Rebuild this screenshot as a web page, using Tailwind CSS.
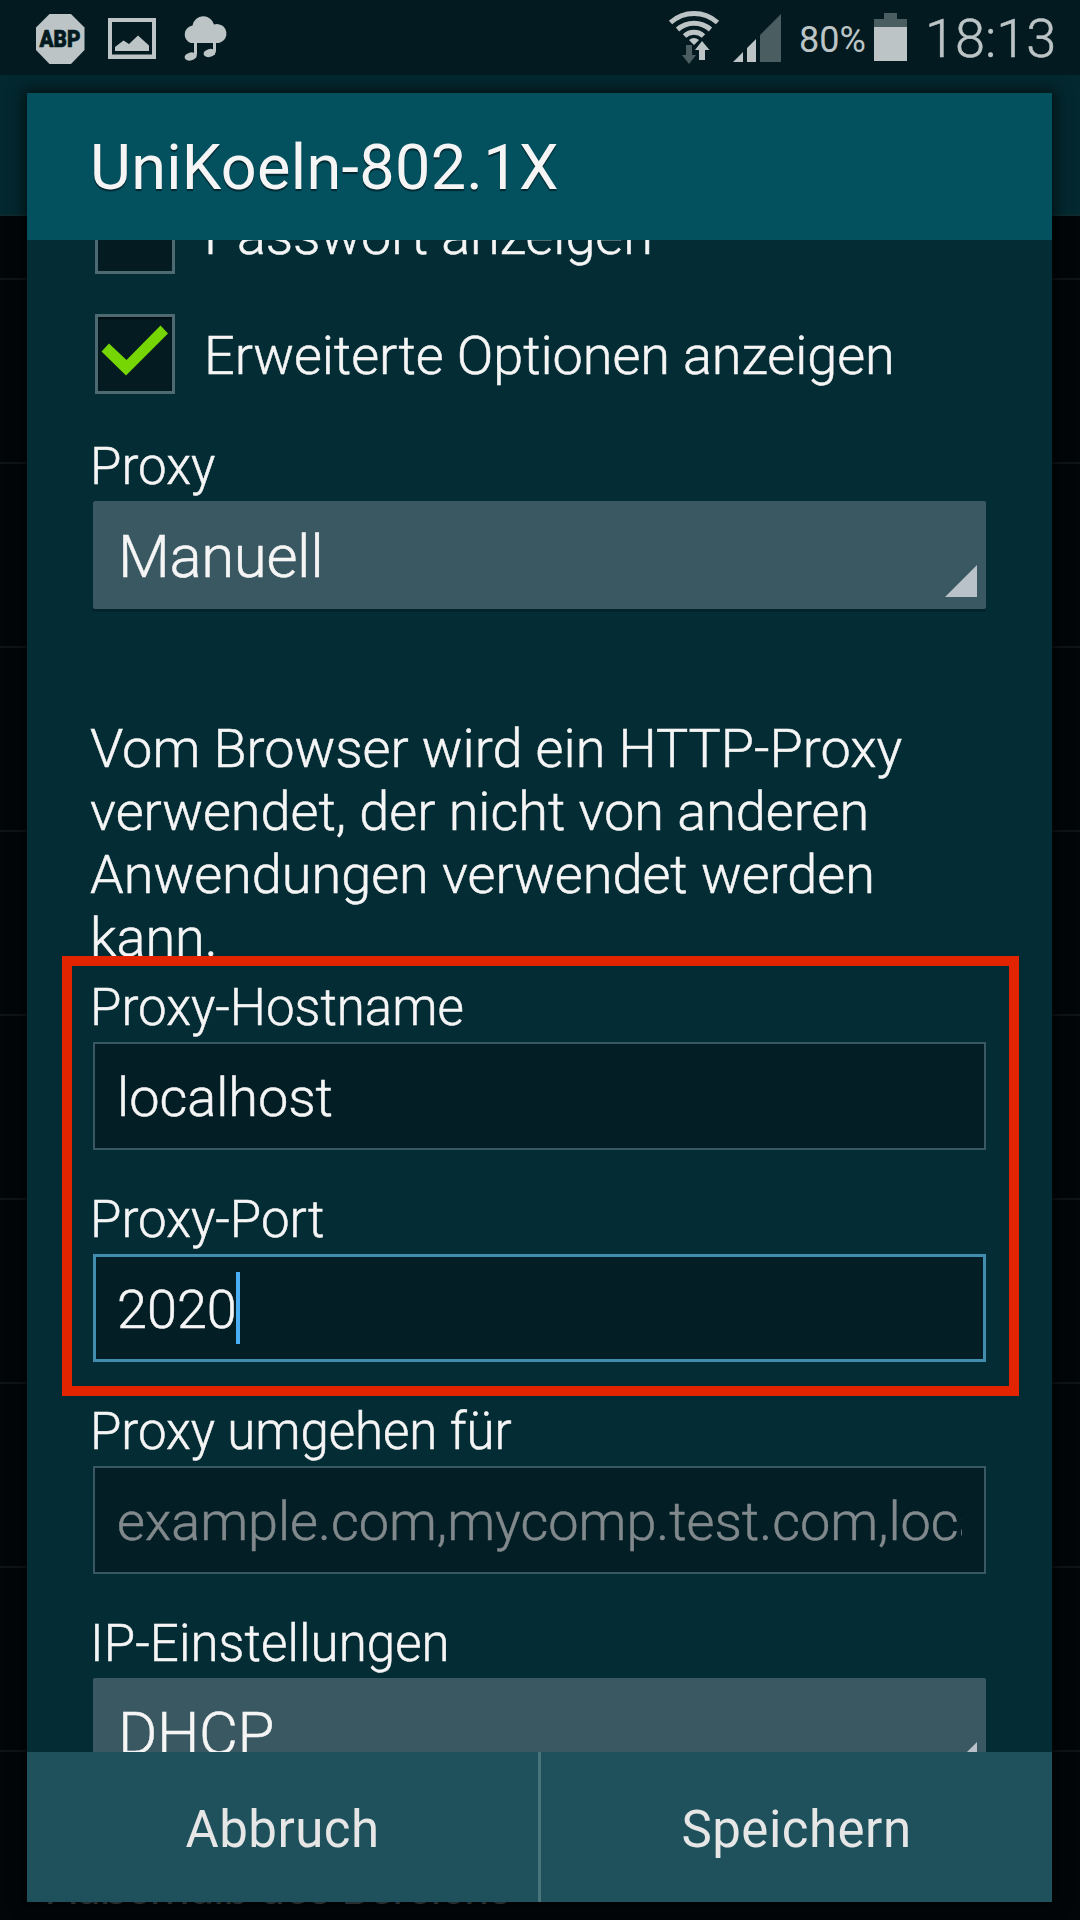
<!DOCTYPE html>
<html lang="de">
<head>
<meta charset="utf-8">
<title>UniKoeln-802.1X</title>
<script src="https://cdn.jsdelivr.net/npm/@tailwindcss/browser@4"></script>
</head>
<body class="relative h-[1920px] w-[1080px] overflow-hidden bg-[#020608] font-['Roboto',sans-serif] text-[#f5f5f5]">
  <!-- Settings list behind the dialog -->
  <div class="absolute inset-0 flex flex-col">
    <div class="mt-[75px] h-[141px] shrink-0 border-b-2 border-[#0c2b30] bg-[#03282f]"></div>
    <div class="h-16 shrink-0 border-b-2 border-[#0f1417]"></div>
    <div class="h-[184px] shrink-0 border-b-2 border-[#0f1417]"></div>
    <div class="h-[184px] shrink-0 border-b-2 border-[#0f1417]"></div>
    <div class="h-[184px] shrink-0 border-b-2 border-[#0f1417]"></div>
    <div class="h-[184px] shrink-0 border-b-2 border-[#0f1417]"></div>
    <div class="h-[184px] shrink-0 border-b-2 border-[#0f1417]"></div>
    <div class="h-[184px] shrink-0 border-b-2 border-[#0f1417]"></div>
    <div class="h-[184px] shrink-0 border-b-2 border-[#0f1417]"></div>
    <div class="h-[184px] shrink-0 border-b-2 border-[#0f1417]"></div>
    <div class="mt-[107px] pl-[47px] text-[45px] leading-[60px] tracking-[-0.4px] whitespace-nowrap text-[#41494d]">Außerhalb des Bereichs</div>
  </div>

  <!-- Dialog -->
  <main class="absolute top-[93px] left-[27px] flex h-[1809px] w-[1025px] flex-col bg-[#042c34] shadow-[0_0_14px_3px_rgba(0,0,0,0.6)]">
    <header class="flex h-[147px] shrink-0 items-center bg-[#03505f] pt-0.5 pl-[63px]">
      <h1 class="text-[63px] leading-[74px] tracking-[0.3px] whitespace-nowrap [text-shadow:0_2px_1px_rgba(0,0,0,0.5)]">UniKoeln-802.1X</h1>
    </header>

    <div class="flex min-h-0 flex-1 flex-col overflow-hidden pr-[66px] pl-[66px] font-light [-webkit-text-stroke:0.5px]">
      <div class="-mt-[46px] ml-0.5 flex h-20 shrink-0 items-center">
        <span class="size-20 border-3 border-[#4d6a72] bg-[#041b21]"></span>
        <span class="ml-[29px] pt-0.5 text-[54px] leading-[63px] tracking-[-0.06px] whitespace-nowrap">Passwort anzeigen</span>
      </div>
      <div class="mt-10 ml-0.5 flex h-20 shrink-0 items-center">
        <span class="size-20 border-3 border-[#4d6a72] bg-[#041b21] shadow-[inset_0_2px_2px_rgba(0,0,0,0.5)]">
          <svg class="size-[74px]" viewBox="0 0 74 74" fill="#76d604"><path d="M3.5 34.5 11 26.5 28.5 43 62.5 8.500 70 16.500 28 58.500Z"/></svg>
        </span>
        <span class="ml-[29px] pt-0.5 text-[54px] leading-[63px] tracking-[-0.06px] whitespace-nowrap">Erweiterte Optionen anzeigen</span>
      </div>

      <div class="mt-[43px] -ml-[3px] h-16 shrink-0 text-[51px] leading-[60px]">Proxy</div>
      <div class="flex h-[108px] shrink-0 items-center justify-between rounded-[2px] bg-[#3a5861] pr-[9px] pl-[25px] shadow-[0_3px_0_#03242b]">
        <span class="pt-1 text-[60px] leading-[70px] tracking-[-0.4px]">Manuell</span>
        <svg class="mt-[52px] size-8" viewBox="0 0 32 32" fill="#bac2c9"><path d="M32 0V32H0Z"/></svg>
      </div>

      <p class="mt-[108px] -ml-[3px] h-[252px] shrink-0 text-[54px] leading-[63px] whitespace-nowrap">Vom Browser wird ein HTTP-Proxy<br>verwendet, der nicht von anderen<br>Anwendungen verwendet werden<br>kann.</p>

      <div class="mt-[9px] -ml-[3px] h-16 shrink-0 text-[51px] leading-[60px]">Proxy-Hostname</div>
      <div class="flex h-[108px] shrink-0 items-center border-2 border-[#3a5861] bg-[#041e25] pl-[22px]">
        <span class="pt-[3px] text-[54px] leading-[63px]">localhost</span>
      </div>

      <div class="mt-10 -ml-[3px] h-16 shrink-0 text-[51px] leading-[60px]">Proxy-Port</div>
      <div class="flex h-[108px] shrink-0 items-center border-3 border-[#418dae] bg-[#041e25] pl-[21px]">
        <span class="pt-[3px] text-[54px] leading-[63px]">2020</span><span class="-ml-px h-[72px] w-1 bg-[#4aaef5]"></span>
      </div>

      <div class="mt-10 -ml-[3px] h-16 shrink-0 text-[51px] leading-[60px] tracking-[-0.05px] whitespace-nowrap">Proxy umgehen für</div>
      <div class="flex h-[108px] shrink-0 items-center border-2 border-[#3a5861] bg-[#041e25] px-[22px]">
        <span class="overflow-hidden pt-[3px] text-[54px] leading-[72px] tracking-[-0.01px] whitespace-nowrap text-[#81898c]">example.com,mycomp.test.com,localhost</span>
      </div>

      <div class="mt-10 -ml-[3px] h-16 shrink-0 text-[51px] leading-[60px] tracking-[0.08px]">IP-Einstellungen</div>
      <div class="flex h-[108px] shrink-0 items-center justify-between rounded-[2px] bg-[#3a5861] pr-[9px] pl-[25px]">
        <span class="pt-1 text-[60px] leading-[70px] tracking-[-0.4px]">DHCP</span>
        <svg class="mt-[52px] size-8" viewBox="0 0 32 32" fill="#bac2c9"><path d="M32 0V32H0Z"/></svg>
      </div>
    </div>

    <footer class="flex h-[150px] shrink-0 bg-[#1e515b] text-[51px] leading-[60px] tracking-[0.5px] text-[#e6e6e6]">
      <div class="flex w-[514px] items-center justify-center border-r-3 border-[#4a747c] pt-1.5">Abbruch</div>
      <div class="flex flex-1 items-center justify-center pt-1.5">Speichern</div>
    </footer>
  </main>

  <!-- Highlight around the proxy fields -->
  <div class="absolute top-[956px] left-[62px] h-[440px] w-[957px] border-10 border-[#e22500]"></div>

  <!-- Status bar -->
  <div class="absolute inset-x-0 top-0 flex h-[75px] bg-[#031b20] text-[#bcc4c6]">
    <svg class="h-[75px] w-[240px]" viewBox="0 0 240 75" fill="#bcc4c6">
      <path d="M49.500 14H71L84.500 27.500V50L71 64H49.500L36 50V27.500Z"/>
      <text x="60" y="46.500" text-anchor="middle" font-family="Roboto, sans-serif" font-weight="900" font-size="23" textLength="41" lengthAdjust="spacingAndGlyphs" fill="#031b20" stroke="#031b20" stroke-width="0.7">ABP</text>
      <path fill-rule="evenodd" d="M108 18H156V59H108ZM112 22V54.500H152V22Z"/>
      <path d="M115 51V47L123.500 40.500 129 44 138 35.500 149 45.500V51Z"/>
      <path d="M191 43A9 9 0 0 1 192.500 25.500 11 11 0 0 1 214 24.500 9.500 9.500 0 1 1 216 43Z"/>
      <path d="M194 42H197V54L196 58H194ZM213 42H216V51L214.500 55H213Z"/>
      <ellipse cx="190.500" cy="56.500" rx="6" ry="4" transform="rotate(-15 190.500 56.500)"/>
      <ellipse cx="209.500" cy="53" rx="6" ry="4" transform="rotate(-15 209.500 53)"/>
    </svg>
    <div class="flex-1"></div>
    <svg class="h-[75px] w-[130px]" viewBox="660 0 130 75">
      <g fill="none" stroke="#bcc4c6" stroke-width="5">
        <path d="M670.500 22.500A35 35 0 0 1 717.500 22.500"/>
        <path d="M677.500 29.500A25 25 0 0 1 710.500 29.500"/>
        <path d="M684.500 36A14 14 0 0 1 703.500 36"/>
      </g>
      <path fill="#bcc4c6" d="M689 40Q694 36 699 40L694 45ZM702 41 709.500 50H705V60H699V50H695Z"/>
      <path fill="#4a5e62" d="M686 45H692V55H696L689 64 682 55H686Z"/>
      <path fill="#bcc4c6" d="M733 62 743 52V62ZM747 62V48L756 39V62Z"/>
      <path fill="#4a5e62" d="M760 62V35L781 14V62Z"/>
    </svg>
    <div class="flex w-[84px] items-center pt-1 pl-[9px] text-[36px] whitespace-nowrap">80%</div>
    <svg class="h-[75px] w-[33px]" viewBox="0 0 33 75"><path fill="#4a5e62" d="M10 13H23V19H33V27H0V19H10Z"/><path fill="#bcc4c6" d="M0 27H33V61H0Z"/></svg>
    <div class="flex w-[173px] items-center pt-0.5 pl-[18px] text-[54px] leading-[63px] font-light whitespace-nowrap [-webkit-text-stroke:0.5px]">18:13</div>
  </div>
</body>
</html>
